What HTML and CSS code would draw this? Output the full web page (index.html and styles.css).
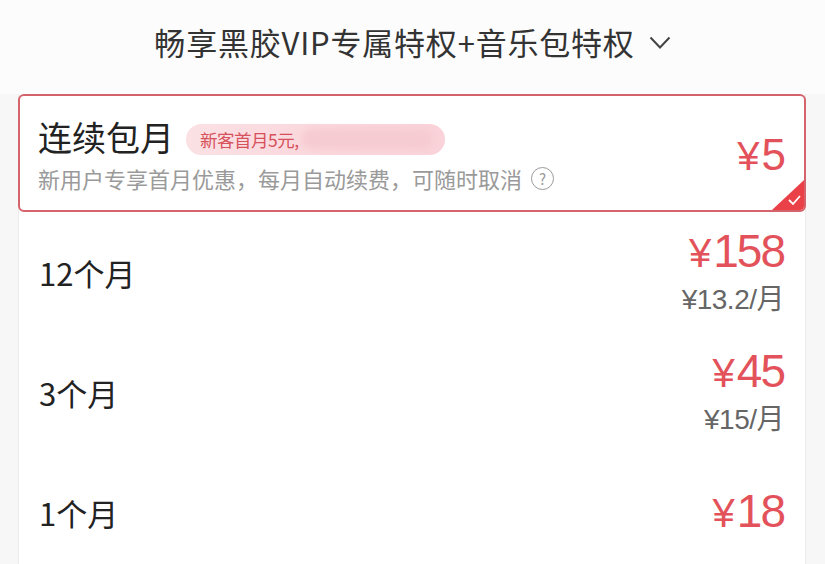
FILE: index.html
```html
<!DOCTYPE html>
<html lang="zh-CN">
<head>
<meta charset="utf-8">
<link rel="stylesheet" href="styles.css">
</head>
<body>
<div class="page">
  <header class="header">
    <span class="title">畅享黑胶VIP专属特权+音乐包特权</span>
    <svg class="chev" width="22" height="14" viewBox="0 0 22 14"><path d="M1.5 1.5 L11 11.5 L20.5 1.5" fill="none" stroke="#444" stroke-width="2"/></svg>
  </header>
  <main class="list">
    <div class="plan selected">
      <div class="left">
        <div class="name-line">
          <span class="name">连续包月</span>
          <span class="tag"><span class="tag-text">新客首月5元,</span><span class="tag-blur"></span></span>
        </div>
        <div class="sub">新用户专享首月优惠，每月自动续费，可随时取消<span class="help">?</span></div>
      </div>
      <div class="right">
        <div class="price big-five"><span class="yen">¥</span>5</div>
      </div>
      <div class="corner">
        <svg width="32" height="30" viewBox="0 0 32 30"><path d="M32 0 L32 30 L0 30 Z" fill="#ea4148"/><path d="M17 20 L21 24 L28 16" fill="none" stroke="#fff" stroke-width="1.8"/></svg>
      </div>
    </div>
    <div class="plan">
      <div class="left"><span class="months">12个月</span></div>
      <div class="right">
        <div class="price"><span class="yen">¥</span>158</div>
        <div class="per">¥13.2/月</div>
      </div>
    </div>
    <div class="plan">
      <div class="left"><span class="months">3个月</span></div>
      <div class="right">
        <div class="price"><span class="yen">¥</span>45</div>
        <div class="per">¥15/月</div>
      </div>
    </div>
    <div class="plan">
      <div class="left"><span class="months">1个月</span></div>
      <div class="right">
        <div class="price"><span class="yen">¥</span>18</div>
      </div>
    </div>
  </main>
</div>
</body>
</html>
```

FILE: styles.css
```css
html, body {
  margin: 0;
  padding: 0;
  background: #f7f7f8;
  font-family: "Noto Sans CJK SC", "Noto Sans", sans-serif;
  color: #333;
}
.page {
  width: 825px;
  height: 564px;
  overflow: hidden;
}
.header {
  height: 94px;
  display: flex;
  align-items: center;
  justify-content: center;
  gap: 14px;
  padding-bottom: 12px;
  box-sizing: border-box;
  background: #fcfcfc;
}
.title {
  font-size: 31px;
  color: #333;
  letter-spacing: 0.8px;
}
.chev {
  margin-top: 4px;
}
.list {
  margin: 0 19px 0 18px;
  background: #fff;
  border-left: 1px solid #ececec;
  border-right: 1px solid #ececec;
}
.plan {
  position: relative;
  height: 120px;
  display: flex;
  align-items: center;
  justify-content: space-between;
  padding: 0 21px 0 20px;
  box-sizing: border-box;
  background: #fff;
}
.plan.selected {
  height: 118px;
  margin: 0 -1px;
  border: 2px solid #d4636b;
  border-radius: 6px;
  padding: 0 20px 0 18px;
  overflow: hidden;
}
.left {
  display: flex;
  flex-direction: column;
}
.name-line {
  display: flex;
  align-items: center;
  gap: 12px;
  margin-top: 2px;
}
.name {
  font-size: 34px;
  line-height: 44px;
  color: #222;
}
.tag {
  display: flex;
  align-items: center;
  height: 31px;
  width: 259px;
  border-radius: 16px;
  background: linear-gradient(90deg, #fbe1e4, #fad6db 60%, #f9d3d9);
  box-sizing: border-box;
  padding-left: 14px;
  margin-top: 4px;
}
.tag-text {
  font-size: 17.5px;
  color: #d6515b;
  letter-spacing: -0.5px;
}
.tag-blur {
  flex: 1;
  height: 20px;
  margin: 0 12px 0 2px;
  border-radius: 10px;
  background: #f6cbd2;
  filter: blur(3px);
}
.sub {
  display: flex;
  align-items: center;
  font-size: 22px;
  line-height: 30px;
  color: #9a9a9a;
  margin-top: 4px;
}
.help {
  display: inline-flex;
  align-items: center;
  justify-content: center;
  width: 21px;
  height: 21px;
  margin-left: 9px;
  border: 1.5px solid #9a9a9a;
  border-radius: 50%;
  font-size: 15px;
  line-height: 1;
  color: #9a9a9a;
}
.right {
  display: flex;
  flex-direction: column;
  align-items: flex-end;
}
.price {
  font-family: "Liberation Sans", "Noto Sans CJK SC", sans-serif;
  font-size: 46px;
  line-height: 50px;
  color: #e3525a;
  letter-spacing: -2px;
}
.yen {
  font-size: 40px;
  margin-right: 4px;
}
.big-five {
  font-size: 44px;
  margin-top: 4px;
}
.per {
  font-family: "Liberation Sans", "Noto Sans CJK SC", sans-serif;
  font-size: 28px;
  line-height: 36px;
  color: #666;
  letter-spacing: -0.5px;
  margin-top: 4px;
}
.months {
  font-size: 31px;
  color: #222;
}
.corner {
  position: absolute;
  right: 0;
  bottom: 0;
  width: 32px;
  height: 30px;
  line-height: 0;
}
```
